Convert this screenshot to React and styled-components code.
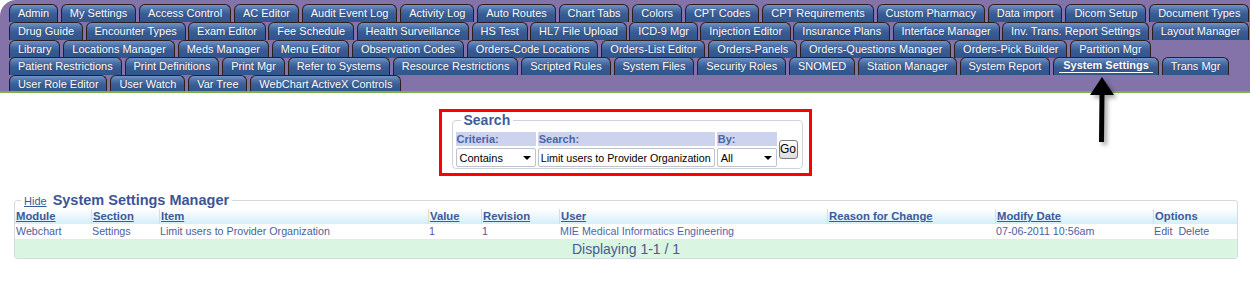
import React from "react";
import styled, { createGlobalStyle } from "styled-components";

const GlobalStyle = createGlobalStyle`
  html, body { margin: 0; padding: 0; background: #ffffff; }
  body { font-family: "Liberation Sans", Arial, sans-serif; }
`;

const TAB_ROWS = [
  ["Admin", "My Settings", "Access Control", "AC Editor", "Audit Event Log", "Activity Log", "Auto Routes", "Chart Tabs", "Colors", "CPT Codes", "CPT Requirements", "Custom Pharmacy", "Data import", "Dicom Setup", "Document Types"],
  ["Drug Guide", "Encounter Types", "Exam Editor", "Fee Schedule", "Health Surveillance", "HS Test", "HL7 File Upload", "ICD-9 Mgr", "Injection Editor", "Insurance Plans", "Interface Manager", "Inv. Trans. Report Settings", "Layout Manager"],
  ["Library", "Locations Manager", "Meds Manager", "Menu Editor", "Observation Codes", "Orders-Code Locations", "Orders-List Editor", "Orders-Panels", "Orders-Questions Manager", "Orders-Pick Builder", "Partition Mgr"],
  ["Patient Restrictions", "Print Definitions", "Print Mgr", "Refer to Systems", "Resource Restrictions", "Scripted Rules", "System Files", "Security Roles", "SNOMED", "Station Manager", "System Report", "System Settings", "Trans Mgr"],
  ["User Role Editor", "User Watch", "Var Tree", "WebChart ActiveX Controls"],
];

const ACTIVE = "System Settings";

const Page = styled.div`
  position: relative;
  width: 1250px;
  min-height: 301px;
`;

const Header = styled.div`
  background: #8373a8;
  border-top-left-radius: 16px;
  border-bottom: 2px solid #7cae4a;
  padding: 4px 0 0 9px;
  height: 87px;
  overflow: hidden;
`;

const TabRow = styled.div`
  display: flex;
  gap: ${(p) => p.$gap}px;
  height: 17.75px;
`;

const Tab = styled.div`
  box-sizing: border-box;
  height: 18px;
  padding: 0 ${(p) => (p.$active ? 9 : 7.9)}px;
  border: 1px solid #2e1e1b;
  border-bottom: none;
  border-radius: 6px 6px 0 0;
  background: linear-gradient(#7393c6 0%, #4a6ea6 30%, #385b93 55%, #30548b 100%);
  color: #ffffff;
  font-size: 11px;
  font-weight: ${(p) => (p.$active ? "bold" : "normal")};
  line-height: 16px;
  white-space: nowrap;
  text-shadow: 0 0 1px rgba(20, 30, 60, 0.5);
  display: flex;
  align-items: flex-start;
`;

const ActiveLabel = styled.span`
  border-bottom: 1px solid #ffffff;
  padding: 0 4px;
  line-height: 14px;
  margin: 0 -4px;
`;

const ArrowSvg = styled.svg`
  position: absolute;
  left: 1084px;
  top: 72px;
`;

const SearchArea = styled.div`
  display: flex;
  justify-content: center;
  margin-top: 16px;
`;

const RedFrame = styled.div`
  border: 3px solid #ff0000;
  padding: 0 6px 4px 10px;
  width: 351px;
`;

const SearchFieldset = styled.fieldset`
  margin: 0;
  border: 1px solid #cdd4de;
  border-radius: 4px;
  padding: 1px 2px 0 2px;
`;

const SearchLegend = styled.legend`
  font-size: 14px;
  font-weight: bold;
  color: #3f5c9a;
  padding: 0 3px;
  margin-left: 6px;
  line-height: 17px;
`;

const SearchTable = styled.table`
  border-spacing: 2px 2px;
  margin: 0 0 -1px -1px;
`;

const HeadCell = styled.th`
  background: #cdd3ee;
  color: #4a66a8;
  font-size: 11px;
  font-weight: bold;
  text-align: left;
  padding: 0 1px;
  height: 14px;
  line-height: 14px;
  width: ${(p) => p.$w}px;
`;

const FieldCell = styled.td`
  padding: 0;
  height: 19px;
`;

const BoxBase = styled.div`
  box-sizing: border-box;
  height: 19px;
  border: 1px solid #bcc3cc;
  border-radius: 2px;
  background: #ffffff;
  color: #000000;
  font-size: 11px;
  display: flex;
  align-items: center;
  justify-content: space-between;
  padding: 0 3px 0 3px;
  white-space: nowrap;
  overflow: hidden;
`;

const TextBox = styled(BoxBase)`
  font-size: 10.7px;
  padding-left: 2px;
`;

const Caret = styled.span`
  width: 0;
  height: 0;
  border-left: 4px solid transparent;
  border-right: 4px solid transparent;
  border-top: 4px solid #000000;
  margin-right: 1px;
`;

const GoCell = styled.td`
  padding: 0;
  vertical-align: middle;
`;

const GoButton = styled.button`
  box-sizing: border-box;
  display: block;
  width: 19px;
  height: 19px;
  padding: 0;
  margin: 0 0 1px 0;
  border: 1px solid #7d7d7d;
  border-radius: 3px;
  background: linear-gradient(#fbfbfb, #dedede);
  font-family: "Liberation Sans", Arial, sans-serif;
  font-size: 12px;
  color: #000000;
  line-height: 15px;
`;

const ManagerFieldset = styled.fieldset`
  margin: 15px 12px 0 14px;
  border: 1px solid #d4dae2;
  border-radius: 3px;
  padding: 0;
`;

const ManagerLegend = styled.legend`
  margin-left: 6px;
  padding: 0 3px;
  display: flex;
  align-items: baseline;
  gap: 6px;
  line-height: 18px;
  height: 18px;
`;

const HideLink = styled.a`
  font-size: 11px;
  color: #3b5a9a;
  text-decoration: underline;
`;

const ManagerTitle = styled.span`
  font-size: 14.5px;
  font-weight: bold;
  color: #3d5595;
`;

const Grid = styled.div`
  display: grid;
  grid-template-columns: 76px 68px 269px 53px 78px 268px 168px 158px 1fr;
`;

const HeaderRow = styled.div`
  display: contents;
`;

const HCell = styled.div`
  height: 15px;
  line-height: 15px;
  background: linear-gradient(#ffffff, #d3effa);
  border-left: ${(p) => (p.$first ? "none" : "1px solid #e6dcb9")};
  padding-left: 1px;
  font-size: 11.3px;
  font-weight: bold;
  color: #3b5a9a;
  white-space: nowrap;
`;

const HLink = styled.a`
  color: inherit;
  text-decoration: underline;
`;

const DCell = styled.div`
  height: 15px;
  line-height: 15px;
  padding-left: 1px;
  font-size: 10.7px;
  color: ${(p) => p.$color || "#4a5f9c"};
  border-bottom: 1px solid #efebc9;
  white-space: nowrap;
  word-spacing: ${(p) => (p.$wide ? "3px" : "0")};
`;

const Footer = styled.div`
  grid-column: 1 / -1;
  background: #dbf5e3;
  height: 18px;
  line-height: 18px;
  text-align: center;
  font-size: 14px;
  color: #4a5a8e;
`;

const COLUMNS = [
  { label: "Module", link: true },
  { label: "Section", link: true },
  { label: "Item", link: true },
  { label: "Value", link: true },
  { label: "Revision", link: true },
  { label: "User", link: true },
  { label: "Reason for Change", link: true },
  { label: "Modify Date", link: true },
  { label: "Options", link: false },
];

const ROW = [
  { v: "Webchart" },
  { v: "Settings" },
  { v: "Limit users to Provider Organization" },
  { v: "1", color: "#5a4fa6" },
  { v: "1", color: "#5a4fa6" },
  { v: "MIE Medical Informatics Engineering", color: "#4d66aa" },
  { v: "" },
  { v: "07-06-2011 10:56am" },
  { v: "Edit Delete", wide: true },
];

const ROW_GAPS = [3, 2.5, 3, 3, 3];

function Arrow() {
  return (
    <ArrowSvg width="44" height="80" viewBox="0 0 44 80">
      <defs>
        <filter id="arrowShadow" x="-50%" y="-20%" width="200%" height="150%">
          <feDropShadow dx="3" dy="3" stdDeviation="2" floodColor="#000" floodOpacity="0.35" />
        </filter>
      </defs>
      <polygon
        points="18,5 6,23 15.5,23 15,70 20,70 20.5,23 30,23"
        fill="#000000"
        filter="url(#arrowShadow)"
      />
    </ArrowSvg>
  );
}

export default function App() {
  return (
    <Page>
      <GlobalStyle />
      <Header>
        {TAB_ROWS.map((row, i) => (
          <TabRow key={i} $gap={ROW_GAPS[i]}>
            {row.map((t) => (
              <Tab key={t} $active={t === ACTIVE}>
                {t === ACTIVE ? <ActiveLabel>{t}</ActiveLabel> : t}
              </Tab>
            ))}
          </TabRow>
        ))}
      </Header>
      <Arrow />

      <SearchArea>
        <RedFrame>
          <SearchFieldset>
            <SearchLegend>Search</SearchLegend>
            <SearchTable>
              <tbody>
                <tr>
                  <HeadCell $w={79}>Criteria:</HeadCell>
                  <HeadCell $w={175}>Search:</HeadCell>
                  <HeadCell $w={59}>By:</HeadCell>
                  <GoCell rowSpan={2}>
                    <GoButton type="button">Go</GoButton>
                  </GoCell>
                </tr>
                <tr>
                  <FieldCell>
                    <BoxBase>
                      <span>Contains</span>
                      <Caret />
                    </BoxBase>
                  </FieldCell>
                  <FieldCell>
                    <TextBox>Limit users to Provider Organization</TextBox>
                  </FieldCell>
                  <FieldCell>
                    <BoxBase>
                      <span>All</span>
                      <Caret />
                    </BoxBase>
                  </FieldCell>
                </tr>
              </tbody>
            </SearchTable>
          </SearchFieldset>
        </RedFrame>
      </SearchArea>

      <ManagerFieldset>
        <ManagerLegend>
          <HideLink href="#">Hide</HideLink>
          <ManagerTitle>System Settings Manager</ManagerTitle>
        </ManagerLegend>
        <Grid>
          <HeaderRow>
            {COLUMNS.map((c, i) => (
              <HCell key={c.label} $first={i === 0}>
                {c.link ? <HLink href="#">{c.label}</HLink> : c.label}
              </HCell>
            ))}
          </HeaderRow>
          {ROW.map((d, i) => (
            <DCell key={i} $color={d.color} $wide={d.wide}>
              {d.v}
            </DCell>
          ))}
          <Footer>Displaying 1-1 / 1</Footer>
        </Grid>
      </ManagerFieldset>
    </Page>
  );
}
